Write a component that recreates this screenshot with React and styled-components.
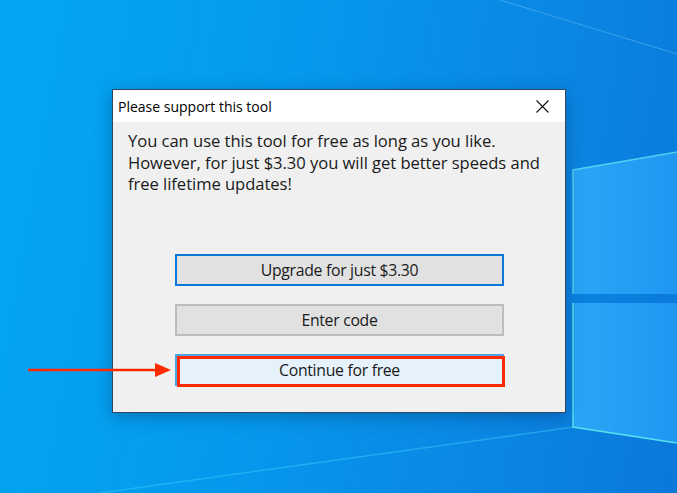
import React from 'react'
import styled, { createGlobalStyle } from 'styled-components'

const GlobalStyle = createGlobalStyle`
  html, body {
    margin: 0;
    padding: 0;
    overflow: hidden;
  }
  body {
    font-family: 'Open Sans', 'Noto Sans', sans-serif;
  }
`;

const Desktop = styled.div`
  position: relative;
  width: 677px;
  height: 493px;
  overflow: hidden;
  box-sizing: border-box;
  padding: 89px 0 0 112px;
  background: linear-gradient(100deg, #03a7f2 0%, #0699ed 40%, #0a86e3 75%, #0b78da 100%);
`;

const Wallpaper = styled.svg`
  position: absolute;
  left: 0;
  top: 0;
  width: 677px;
  height: 493px;
`;

const Dialog = styled.div`
  position: relative;
  width: 454px;
  height: 324px;
  box-sizing: border-box;
  border: 1px solid #2f4a60;
  background: #f0f0f0;
  display: flex;
  flex-direction: column;
  box-shadow: 0 4px 16px rgba(0, 40, 90, 0.35);
`;

const TitleBar = styled.div`
  height: 32px;
  background: #ffffff;
  display: flex;
  align-items: center;
  justify-content: space-between;
  padding: 0 0 0 5px;
  box-sizing: border-box;
`;

const Title = styled.span`
  font-size: 14px;
  color: #000;
`;

const CloseButton = styled.div`
  width: 46px;
  height: 32px;
  display: flex;
  align-items: center;
  justify-content: center;
`;

const Body = styled.div`
  flex: 1;
  padding: 8px 10px 0 15px;
  display: flex;
  flex-direction: column;
`;

const Message = styled.p`
  margin: 0;
  font-size: 16.6px;
  line-height: 21.5px;
  color: #1a1a1a;
  letter-spacing: -0.05px;
`;

const Buttons = styled.div`
  margin: 59px 0 0 47px;
  width: 329px;
  display: flex;
  flex-direction: column;
  gap: 18px;
`;

const Button = styled.div`
  position: relative;
  height: 32px;
  box-sizing: border-box;
  display: flex;
  align-items: center;
  justify-content: center;
  font-size: 15.8px;
  letter-spacing: -0.3px;
  color: #1a1a1a;
  background: ${p => (p.$hover ? '#e5f1fb' : '#e1e1e1')};
  border: ${p => (p.$focus ? '2px solid #0a78d6' : p.$hover ? '2px solid #4aa3e4' : '2px solid #bdbdbd')};
`;

const Highlight = styled.div`
  position: absolute;
  left: 0px;
  top: 0px;
  right: -3px;
  bottom: -3px;
  border: 3px solid #ff2a00;
  pointer-events: none;
`;

const Arrow = styled.svg`
  position: absolute;
  left: 26px;
  top: 360px;
`;

export default function App() {
  return (
    <>
      <GlobalStyle />
      <Desktop>
        <Wallpaper viewBox="0 0 677 493">
          <defs>
            <linearGradient id="pane" x1="0" y1="0" x2="1" y2="0">
              <stop offset="0" stopColor="#2aa6f6" />
              <stop offset="1" stopColor="#1f97f2" />
            </linearGradient>
          </defs>
          <line x1="500" y1="0" x2="677" y2="54" stroke="#5ab8f5" strokeWidth="1" opacity="0.6" />
          <line x1="100" y1="493" x2="574" y2="427" stroke="#38c8fa" strokeWidth="1.5" opacity="0.5" />
          <polygon points="573,170 677,152 677,294 573,294" fill="url(#pane)" />
          <polygon points="573,303 677,303 677,443 573,427" fill="url(#pane)" />
          <polyline points="677,152 573,170 573,294" fill="none" stroke="#5fe0f2" strokeWidth="1.5" opacity="0.8" />
          <polyline points="573,303 573,427 677,443" fill="none" stroke="#5fe8f0" strokeWidth="1.5" opacity="0.9" />
        </Wallpaper>
        <Dialog>
          <TitleBar>
            <Title>Please support this tool</Title>
            <CloseButton>
              <svg width="13" height="13" viewBox="0 0 13 13">
                <path d="M0.5 0.5 L12.5 12.5 M12.5 0.5 L0.5 12.5" stroke="#111" strokeWidth="1.1" />
              </svg>
            </CloseButton>
          </TitleBar>
          <Body>
            <Message>
              You can use this tool for free as long as you like.
              <br />
              However, for just $3.30 you will get better speeds and
              <br />
              free lifetime updates!
            </Message>
            <Buttons>
              <Button $focus>Upgrade for just $3.30</Button>
              <Button>Enter code</Button>
              <Button $hover>
                Continue for free
                <Highlight />
              </Button>
            </Buttons>
          </Body>
        </Dialog>
        <Arrow width="148" height="20" viewBox="0 0 148 20">
          <line x1="2" y1="10" x2="132" y2="10" stroke="#ff2a00" strokeWidth="2.5" />
          <polygon points="129,3 145,10 129,17" fill="#ff2a00" />
        </Arrow>
      </Desktop>
    </>
  )
}
